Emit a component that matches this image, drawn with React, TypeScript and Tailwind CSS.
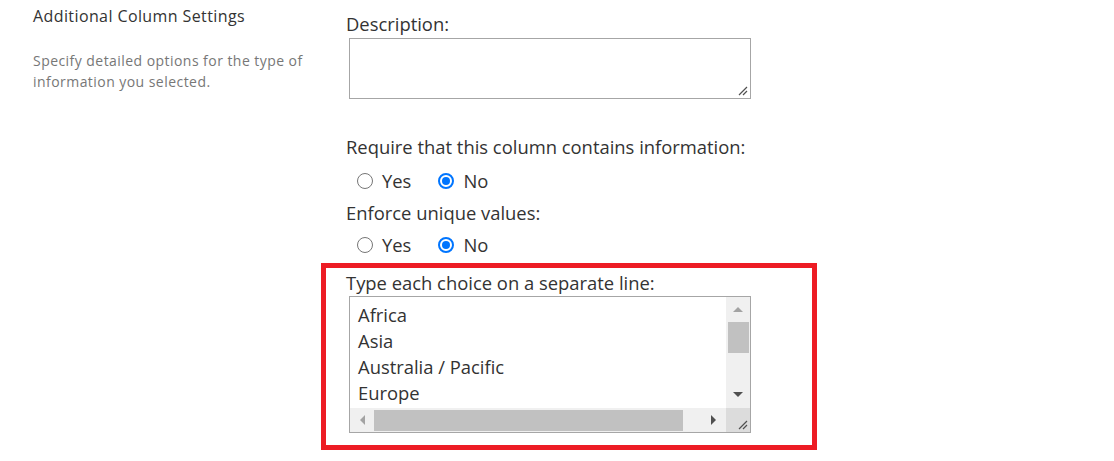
const font = { fontFamily: '"Segoe UI", "Open Sans", "Noto Sans", sans-serif' };

const Radio = ({ checked, label }: { checked?: boolean; label: string }) => (
  <label className="flex items-center gap-[9px] text-[18.4px] text-[#333]">
    {checked ? (
      <span className="w-[16px] h-[16px] rounded-full border-[2px] border-[#0075ff] flex items-center justify-center">
        <span className="w-[8px] h-[8px] rounded-full bg-[#0075ff]" />
      </span>
    ) : (
      <span className="w-[16px] h-[16px] rounded-full border border-[#767676] bg-white" />
    )}
    <span>{label}</span>
  </label>
);

const Grip = () => (
  <svg width="10" height="10" viewBox="0 0 10 10" className="text-[#505050]">
    <path d="M9 1 L1 9 M9 5 L5 9" stroke="currentColor" strokeWidth="1.2" />
  </svg>
);

const App = () => {
  const choices = ["Africa", "Asia", "Australia / Pacific", "Europe"];

  return (
    <div className="w-[1114px] h-[461px] bg-white flex" style={font}>
      {/* left side */}
      <div className="w-[321px] pl-[33px] pt-[4px]">
        <h3 className="text-[16px] tracking-[0.4px] leading-[24px] text-[#333]">Additional Column Settings</h3>
        <p className="mt-[22px] text-[14px] tracking-[0.45px] leading-[21px] text-[#777] w-[285px]">
          Specify detailed options for the type of information you selected.
        </p>
      </div>

      {/* right side */}
      <div className="flex flex-col">
        <div className="pl-[25px] pt-[10px]">
          <div className="text-[18.4px] leading-[28px] text-[#333]">Description:</div>
          <div className="ml-[3px] w-[402px] h-[61px] border border-[#a6a6a6] flex items-end justify-end p-[2px]">
            <Grip />
          </div>
        </div>

        <div className="pl-[25px] pt-[34px]">
          <div className="text-[18.4px] leading-[28px] text-[#333]">Require that this column contains information:</div>
          <div className="mt-[2px] flex items-center gap-[27px] pl-[11px] h-[36px]">
            <Radio label="Yes" />
            <Radio checked label="No" />
          </div>
          <div className="text-[18.4px] leading-[28px] text-[#333]">Enforce unique values:</div>
          <div className="flex items-center gap-[27px] pl-[11px] h-[36px]">
            <Radio label="Yes" />
            <Radio checked label="No" />
          </div>
        </div>

        <div className="w-[496px] h-[187px] border-[5px] border-[#ed1c24] pl-[20px] pt-[2px]">
          <div className="text-[18.4px] leading-[26px] text-[#333]">Type each choice on a separate line:</div>
          <div className="ml-[3px] w-[402px] h-[137px] border border-[#a6a6a6] flex flex-col">
            <div className="flex flex-1 min-h-0">
              <div className="flex-1 pl-[8px] pt-[5px] text-[18.4px] leading-[26px] text-[#333]">
                {choices.map((c) => (
                  <div key={c}>{c}</div>
                ))}
              </div>
              <div className="w-[24px] bg-[#f0f0f0] flex flex-col items-center">
                <div className="h-[25px] flex items-center justify-center">
                  <span className="w-0 h-0 border-x-[5px] border-x-transparent border-b-[5px] border-b-[#a3a3a3]" />
                </div>
                <div className="w-[21px] h-[31px] ml-[1px] bg-[#c1c1c1]" />
                <div className="flex-1" />
                <div className="h-[22px] pb-[6px] flex items-center justify-center">
                  <span className="w-0 h-0 border-x-[5px] border-x-transparent border-t-[5px] border-t-[#505050]" />
                </div>
              </div>
            </div>
            <div className="flex h-[24px] bg-[#f0f0f0]">
              <div className="flex-1 flex items-center">
                <div className="w-[24px] flex items-center justify-center">
                  <span className="w-0 h-0 border-y-[5px] border-y-transparent border-r-[5px] border-r-[#a3a3a3]" />
                </div>
                <div className="w-[309px] h-[21px] mt-[1px] bg-[#c1c1c1]" />
                <div className="flex-1" />
                <div className="w-[26px] flex items-center justify-center">
                  <span className="w-0 h-0 border-y-[5px] border-y-transparent border-l-[5px] border-l-[#505050]" />
                </div>
              </div>
              <div className="w-[24px] bg-[#dcdcdc] flex items-end justify-end p-[2px]">
                <Grip />
              </div>
            </div>
          </div>
        </div>
      </div>
    </div>
  );
};

export default App;
